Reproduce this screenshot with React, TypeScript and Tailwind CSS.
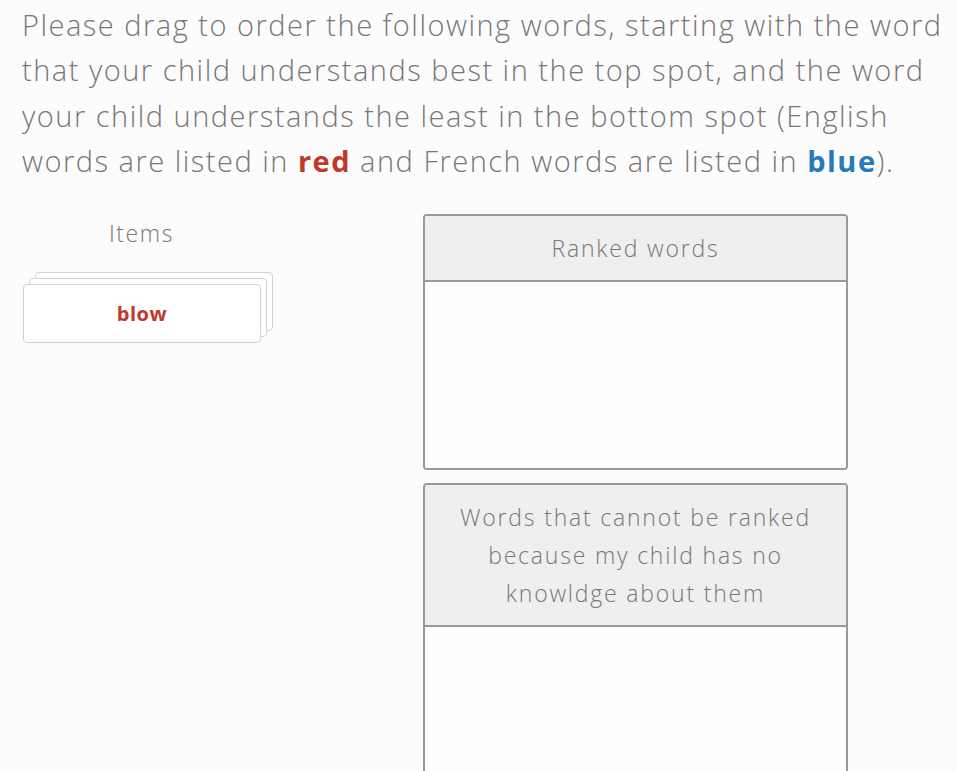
import React from 'react';

const font = { fontFamily: '"Open Sans", "Noto Sans", sans-serif' };

function WordCard({ word, lang }: { word: string; lang: 'en' | 'fr' }) {
  return (
    <div className="relative h-[59px] w-[238px]">
      <div className="absolute left-[12px] top-[-12px] h-[59px] w-[238px] rounded-[4px] border-[1.5px] border-[#d4d4d4] bg-white" />
      <div className="absolute left-[6px] top-[-6px] h-[59px] w-[238px] rounded-[4px] border-[1.5px] border-[#d4d4d4] bg-white" />
      <div className="absolute inset-0 flex items-center justify-center rounded-[4px] border-[1.5px] border-[#d0d0d0] bg-white">
        <span
          className={
            'text-[20px] font-bold tracking-[0.6px] ' +
            (lang === 'en' ? 'text-[#c0392b]' : 'text-[#2a7ab8]')
          }
        >
          {word}
        </span>
      </div>
    </div>
  );
}

function DropBox({ title, bodyHeight }: { title: React.ReactNode; bodyHeight: string }) {
  return (
    <div className="w-[425px] overflow-hidden rounded-[4px] border-2 border-[#999]">
      <div className="bg-[#efefef] px-[10px] py-[13px] text-center text-[23px] leading-[38px] font-light tracking-[1.8px] text-[#777]">
        {title}
      </div>
      <div className={'border-t-2 border-[#999] bg-[#fefefe] ' + bodyHeight} />
    </div>
  );
}

export default function App() {
  return (
    <div className="min-h-screen bg-[#fcfcfc] px-[22px] pt-[2px]" style={font}>
      <p className="text-[29px] leading-[45.3px] font-light tracking-[1.5px] whitespace-nowrap text-[#777]">
        Please drag to order the following words, starting with the word
        <br />
        that your child understands best in the top spot, and the word
        <br />
        your child understands the least in the bottom spot (English
        <br />
        words are listed in <span className="font-bold text-[#c0392b]">red</span> and French
        words are listed in <span className="font-bold text-[#2a7ab8]">blue</span>).
      </p>

      <div className="mt-[31px] flex">
        <div className="w-[238px] shrink-0 pt-[2px] pl-[1px]">
          <div className="pt-[1px] text-center text-[23px] leading-[32px] font-light tracking-[1.6px] text-[#777]">
            Items
          </div>
          <div className="mt-[35px]">
            <WordCard word="blow" lang="en" />
          </div>
        </div>

        <div className="ml-[163px] flex flex-col gap-[13px]">
          <DropBox title="Ranked words" bodyHeight="h-[188px]" />
          <DropBox
            title={
              <>
                Words that cannot be ranked
                <br />
                because my child has no
                <br />
                knowldge about them
              </>
            }
            bodyHeight="h-[200px]"
          />
        </div>
      </div>
    </div>
  );
}
